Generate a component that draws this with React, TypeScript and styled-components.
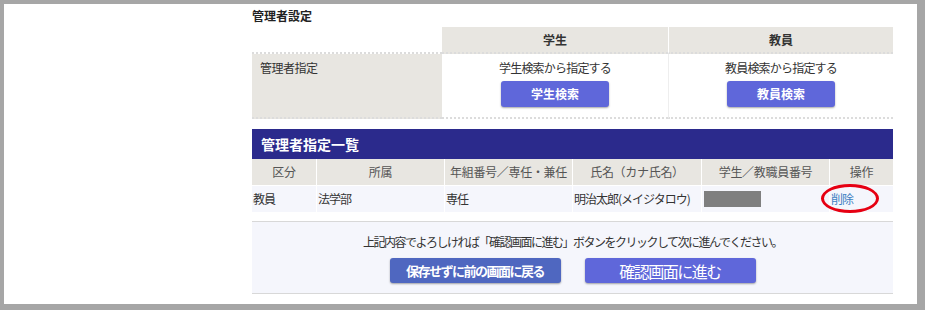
import React from "react";
import styled, { createGlobalStyle } from "styled-components";

const GlobalStyle = createGlobalStyle`
  html, body {
    margin: 0;
    padding: 0;
    background: #fff;
  }
  body {
    font-family: "Noto Sans CJK JP", "Liberation Sans", sans-serif;
    font-size: 12px;
    color: #333;
  }
  * {
    box-sizing: border-box;
  }
`;

const Frame = styled.div`
  width: 925px;
  height: 310px;
  border-style: solid;
  border-color: #a6a6a6;
  border-width: 4px 8px 6px 4px;
  padding: 4px 0 0 248px;
  background: #fff;
  overflow: hidden;
`;

const Content = styled.div`
  width: 641px;
`;

const SectionTitle = styled.h2`
  margin: 0 0 3px;
  font-size: 12px;
  font-weight: bold;
  line-height: 16px;
  color: #222;
`;

const SettingsGrid = styled.div`
  display: grid;
  grid-template-columns: 190px 226px 225px;
`;

const HeadCell = styled.div<{ $blank?: boolean; $divider?: boolean }>`
  height: 27px;
  line-height: 25px;
  text-align: center;
  font-weight: bold;
  color: #333;
  background: ${(p) => (p.$blank ? "#fff" : "#e8e6e1")};
  border-left: ${(p) => (p.$divider ? "1px solid #fff" : "none")};
  border-bottom: 2px dotted #dcdcdc;
`;

const LabelCell = styled.div`
  height: 65px;
  padding: 6px 0 0 8px;
  line-height: 16px;
  letter-spacing: -0.5px;
  background: #e8e6e1;
  border-bottom: 2px dotted #dcdcdc;
`;

const OptionCell = styled.div<{ $divider?: boolean }>`
  height: 65px;
  padding-top: 6px;
  display: flex;
  flex-direction: column;
  align-items: center;
  border-left: ${(p) => (p.$divider ? "1px solid #eee" : "none")};
  border-bottom: 2px dotted #dcdcdc;
`;

const OptionText = styled.div`
  line-height: 16px;
  margin-bottom: 5px;
  letter-spacing: -0.8px;
`;

const Button = styled.button<{ $tone?: "primary" | "back"; $size?: "small" | "large" }>`
  border: none;
  border-radius: 3px;
  color: #fff;
  cursor: pointer;
  font-family: inherit;
  padding: 0;
  box-shadow: 0 1px 2px rgba(0, 0, 0, 0.35);
  background: ${(p) => (p.$tone === "back" ? "#4f67c0" : "#5f67da")};
  width: ${(p) => (p.$size === "small" ? "108px" : "171px")};
  height: ${(p) => (p.$size === "small" ? "26px" : "25px")};
  font-size: ${(p) => (p.$size === "large" ? "16px" : p.$tone === "back" ? "13px" : "12px")};
  font-weight: ${(p) => (p.$size === "large" ? "normal" : "bold")};
  letter-spacing: ${(p) => (p.$size === "small" ? "0" : "-1.5px")};
  line-height: 1;
`;

const ListTitle = styled.div`
  margin-top: 10px;
  height: 30px;
  padding-left: 9px;
  line-height: 30px;
  background: #2b2a8c;
  color: #fff;
  font-size: 14px;
  font-weight: bold;
`;

const ListGrid = styled.div`
  display: grid;
  grid-template-columns: 64px 127px 127px 128px 127px 63px;
  column-gap: 1px;
  row-gap: 1px;
`;

const ListHead = styled.div`
  height: 26px;
  line-height: 26px;
  text-align: center;
  background: #e8e6e1;
  color: #555;
  letter-spacing: -0.3px;
`;

const ListCell = styled.div`
  position: relative;
  height: 26px;
  line-height: 26px;
  padding-left: 1px;
  background: #f5f6fc;
  color: #333;
  white-space: nowrap;
  letter-spacing: -1px;
`;

const MaskedId = styled.div`
  width: 57px;
  height: 16px;
  margin: 5px 0 0 1px;
  background: #7f7f7f;
`;

const DeleteLink = styled.a`
  color: #3d7fc2;
  text-decoration: none;
`;

const Highlight = styled.span`
  position: absolute;
  left: -9px;
  top: -2px;
  width: 58px;
  height: 29px;
  border: 3px solid #e60012;
  border-radius: 50%;
  pointer-events: none;
`;

const ConfirmBox = styled.div`
  margin-top: 9px;
  height: 73px;
  padding-top: 12px;
  border-top: 1px solid #d8d8d8;
  border-bottom: 1px solid #d8d8d8;
  background: #f5f6fc;
  text-align: center;
`;

const ConfirmText = styled.p`
  margin: 0 0 8px;
  line-height: 16px;
  letter-spacing: -1.5px;
  color: #333;
`;

const ButtonRow = styled.div`
  display: flex;
  justify-content: center;
  gap: 24px;
`;

const listHeads = ["区分", "所属", "年組番号／専任・兼任", "氏名（カナ氏名）", "学生／教職員番号", "操作"];

export default function App() {
  return (
    <>
      <GlobalStyle />
      <Frame>
        <Content>
          <SectionTitle>管理者設定</SectionTitle>
          <SettingsGrid>
            <HeadCell $blank />
            <HeadCell>学生</HeadCell>
            <HeadCell $divider>教員</HeadCell>
            <LabelCell>管理者指定</LabelCell>
            <OptionCell>
              <OptionText>学生検索から指定する</OptionText>
              <Button $size="small">学生検索</Button>
            </OptionCell>
            <OptionCell $divider>
              <OptionText>教員検索から指定する</OptionText>
              <Button $size="small">教員検索</Button>
            </OptionCell>
          </SettingsGrid>

          <ListTitle>管理者指定一覧</ListTitle>
          <ListGrid>
            {listHeads.map((h) => (
              <ListHead key={h}>{h}</ListHead>
            ))}
            <ListCell>教員</ListCell>
            <ListCell>法学部</ListCell>
            <ListCell>専任</ListCell>
            <ListCell>明治太郎(メイジタロウ)</ListCell>
            <ListCell>
              <MaskedId />
            </ListCell>
            <ListCell>
              <DeleteLink href="#">削除</DeleteLink>
              <Highlight />
            </ListCell>
          </ListGrid>

          <ConfirmBox>
            <ConfirmText>
              上記内容でよろしければ「確認画面に進む」ボタンをクリックして次に進んでください。
            </ConfirmText>
            <ButtonRow>
              <Button $tone="back">保存せずに前の画面に戻る</Button>
              <Button $size="large">確認画面に進む</Button>
            </ButtonRow>
          </ConfirmBox>
        </Content>
      </Frame>
    </>
  );
}
